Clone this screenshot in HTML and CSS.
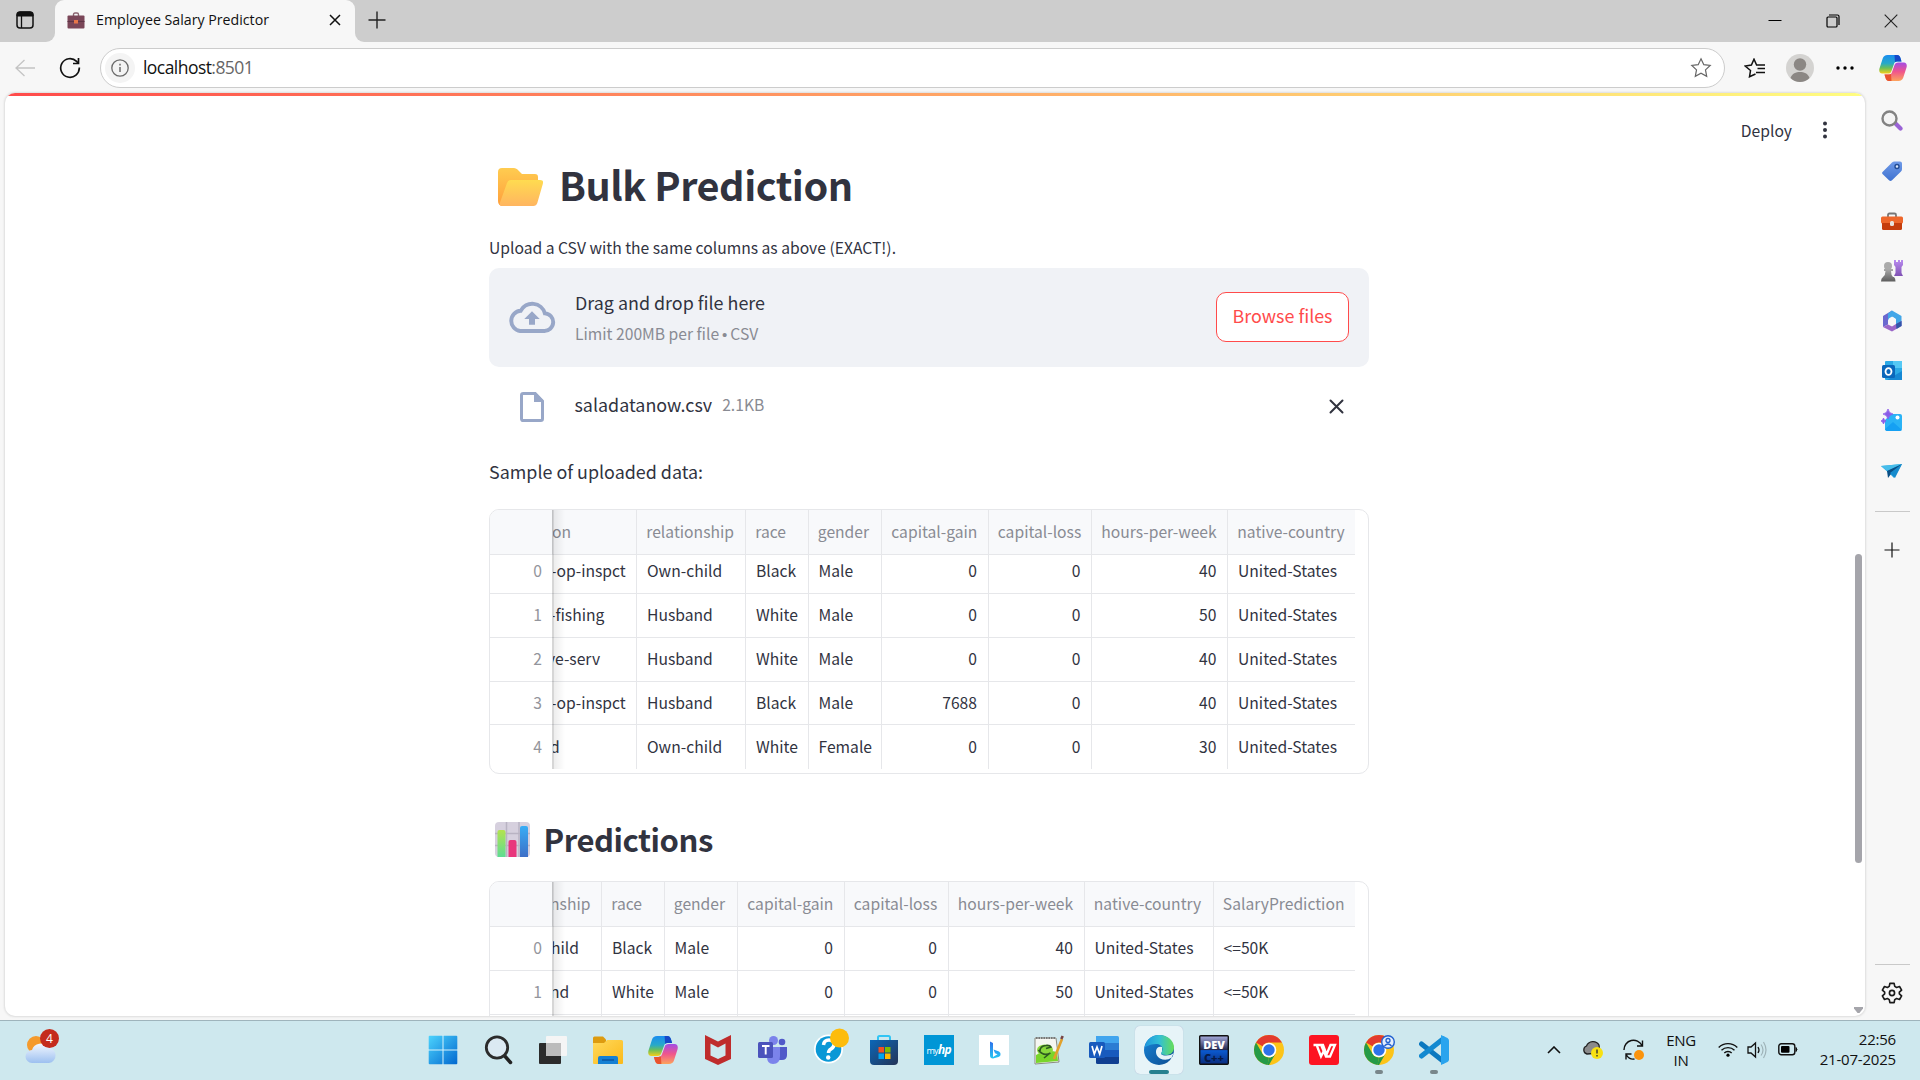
FILE: index.html
```html
<!DOCTYPE html>
<html lang="en">
<head>
<meta charset="utf-8">
<title>Employee Salary Predictor</title>
<link rel="stylesheet" href="styles.css">
</head>
<body>
<svg class="defs" width="0" height="0">
  <defs>
    <linearGradient id="gWin" x1="0" y1="0" x2="1" y2="1"><stop offset="0" stop-color="#4cd3fd"/><stop offset="1" stop-color="#0268cf"/></linearGradient>
    <linearGradient id="gCopA" x1="0" y1="0" x2="0" y2="1"><stop offset="0" stop-color="#1a8df0"/><stop offset=".45" stop-color="#27a9c9"/><stop offset=".7" stop-color="#6abf5a"/><stop offset="1" stop-color="#f6cf18"/></linearGradient>
    <linearGradient id="gCopB" x1="0" y1="0" x2="0" y2="1"><stop offset="0" stop-color="#a24ce6"/><stop offset=".5" stop-color="#f0558c"/><stop offset="1" stop-color="#fca45c"/></linearGradient>
    <linearGradient id="gFold" x1="0" y1="0" x2="1" y2="1"><stop offset="0" stop-color="#ffd95c"/><stop offset="1" stop-color="#fbb919"/></linearGradient>
    <linearGradient id="gEmo" x1="0" y1="0" x2="0" y2="1"><stop offset="0" stop-color="#ffdb50"/><stop offset="1" stop-color="#ffb560"/></linearGradient>
    <linearGradient id="gEmoBack" x1="0" y1="0" x2="0" y2="1"><stop offset="0" stop-color="#ffcc50"/><stop offset="1" stop-color="#ff9f3c"/></linearGradient>
    <linearGradient id="gEdge" x1="0" y1="0" x2="1" y2="0"><stop offset="0" stop-color="#1d94dd"/><stop offset=".5" stop-color="#32bfd6"/><stop offset="1" stop-color="#67de56"/></linearGradient>
    <linearGradient id="gEdgeB" x1="0" y1="0" x2="1" y2="1"><stop offset="0" stop-color="#1785d8"/><stop offset="1" stop-color="#0c4c91"/></linearGradient>
    <linearGradient id="gStore" x1="0" y1="0" x2="1" y2="1"><stop offset="0" stop-color="#0b67b8"/><stop offset="1" stop-color="#243457"/></linearGradient>
    <linearGradient id="gTag" x1="0" y1="0" x2="0" y2="1"><stop offset="0" stop-color="#6f9ae8"/><stop offset="1" stop-color="#3f72d0"/></linearGradient>
    <linearGradient id="gGray" x1="0" y1="0" x2="0" y2="1"><stop offset="0" stop-color="#aaa"/><stop offset="1" stop-color="#5d5d5d"/></linearGradient>
    <linearGradient id="gPurp" x1="0" y1="0" x2="0" y2="1"><stop offset="0" stop-color="#b98bf0"/><stop offset="1" stop-color="#8052b4"/></linearGradient>
    <linearGradient id="gDev" x1="0" y1="0" x2="0" y2="1"><stop offset="0" stop-color="#a9aee0"/><stop offset=".5" stop-color="#23284e"/><stop offset=".52" stop-color="#0a5ad0"/><stop offset="1" stop-color="#0b2c7c"/></linearGradient>
    <linearGradient id="gGreen" x1="0" y1="0" x2="0" y2="1"><stop offset="0" stop-color="#b3e34e"/><stop offset="1" stop-color="#5edc94"/></linearGradient>
    <linearGradient id="gBlue" x1="0" y1="0" x2="0" y2="1"><stop offset="0" stop-color="#38adf5"/><stop offset="1" stop-color="#3e6fc7"/></linearGradient>
    <linearGradient id="gBing" x1="0" y1="0" x2="0" y2="1"><stop offset="0" stop-color="#2f6fea"/><stop offset="1" stop-color="#27c8f4"/></linearGradient>
    <linearGradient id="gCloud" x1="0" y1="0" x2="0" y2="1"><stop offset="0" stop-color="#f2f7ff"/><stop offset="1" stop-color="#9dc0f0"/></linearGradient>
    <symbol id="copilot" viewBox="0 0 28 28">
      <path d="M8.500 1h9.500c2.200 0 3 1.300 3.600 3.500l.9 3h-4.300c-2 0-2.700.8-3.300 2.800l-2.400 6.600c-.6 1.800-1.600 2.700-3.700 2.700H3.200C.6 19.600-.2 17.400.4 14.800L3.700 4.500C4.500 2.200 6 1 8.500 1z" fill="url(#gCopA)"/>
      <path d="M15.500 1H18c2.200 0 3 1.300 3.600 3.500l.9 3h-4.300c-1 0-1.700.2-2.200.8z" fill="#1648c8"/>
      <path d="M19.500 27H10c-2.200 0-3-1.300-3.600-3.500l-.9-3h4.300c2 0 2.700-.8 3.300-2.800l2.400-6.600c.6-1.800 1.600-2.700 3.700-2.700h5.600c2.600 0 3.400 2.200 2.800 4.800l-3.300 10.300c-.8 2.300-2.300 3.500-4.800 3.500z" fill="url(#gCopB)"/>
      <path d="M12.500 27H10c-2.200 0-3-1.300-3.600-3.500l-.9-3h4.300c1 0 1.700-.2 2.200-.8z" fill="#e9532f"/>
    </symbol>
    <symbol id="chrome" viewBox="0 0 30 30">
      <circle cx="15" cy="15" r="15" fill="#fcc419"/>
      <path d="M15 0a15 15 0 0 1 13 7.500H15A7.500 7.500 0 0 0 8.500 11.200L2 7.500A15 15 0 0 1 15 0z" fill="#e33b2e"/>
      <path d="M2 7.500l6.500 11.250A7.500 7.500 0 0 0 15 22.500l-1.500 7.400A15 15 0 0 1 2 7.500z" fill="#259a47"/>
      <path d="M15 22.500a7.500 7.500 0 0 0 6.500-3.750L15 30h-1.600z" fill="#259a47"/>
      <circle cx="15" cy="15" r="7.300" fill="#fff"/><circle cx="15" cy="15" r="5.700" fill="#2f72e8"/>
    </symbol>
  </defs>
</svg>

<header class="tabbar">
  <div class="workspaces"><svg width="18" height="18" viewBox="0 0 18 18"><rect x="1" y="1" width="16" height="16" rx="3" fill="none" stroke="#111" stroke-width="1.500"/><path d="M1 5V4a3 3 0 0 1 3-3h10a3 3 0 0 1 3 3v1z" fill="#111" stroke="#111"/><path d="M5.500 5v12" stroke="#111" stroke-width="1.300"/></svg></div>
  <div class="tab">
    <svg class="favicon" width="18" height="17" viewBox="0 0 18 17"><path d="M6.500 4V2.500Q6.500 1 8 1h2q1.500 0 1.500 1.500V4" fill="none" stroke="#8a6470" stroke-width="1.400"/><rect x=".5" y="3.500" width="17" height="13" rx="1" fill="#7a4658"/><path d="M.5 9.500h17" stroke="#5f3546"/><rect x="7" y="8" width="4" height="3.500" fill="#e7774a"/></svg>
    <span class="tab-title">Employee Salary Predictor</span>
    <svg class="tab-close" width="12" height="12" viewBox="0 0 12 12"><path d="M1 1l10 10M11 1L1 11" stroke="#111" stroke-width="1.500"/></svg>
  </div>
  <svg class="newtab" width="18" height="18" viewBox="0 0 18 18"><path d="M9 .5v17M.5 9h17" stroke="#222" stroke-width="1.400"/></svg>
  <div class="winctl">
    <svg width="14" height="14" viewBox="0 0 14 14"><path d="M.5 6.500h13" stroke="#000"/></svg>
    <svg width="14" height="14" viewBox="0 0 14 14"><rect x="1" y="3" width="10" height="10" rx="1" fill="none" stroke="#000" stroke-width="1.200"/><path d="M3 1h8.500q1.500 0 1.500 1.500V11" fill="none" stroke="#000" stroke-width="1.200"/></svg>
    <svg width="14" height="14" viewBox="0 0 14 14"><path d="M.7.7l12.600 12.600M13.300.7L.7 13.300" stroke="#222" stroke-width="1.100"/></svg>
  </div>
</header>

<div class="toolbar">
  <svg class="back" width="20" height="18" viewBox="0 0 20 18"><path d="M20 9H1M9.500 1L1 9l8.500 8" fill="none" stroke="#c4c4c4" stroke-width="1.300"/></svg>
  <svg class="reload" width="22" height="22" viewBox="0 0 22 22"><path d="M20.300 10.500A9.300 9.300 0 1 1 17.600 4.400L19 6" fill="none" stroke="#111" stroke-width="1.700"/><path d="M19.500 1v5.500H14" fill="none" stroke="#111" stroke-width="1.700"/></svg>
  <div class="address">
    <span class="info"><svg width="18" height="18" viewBox="0 0 18 18"><circle cx="9" cy="9" r="8.200" fill="none" stroke="#6b6b6b" stroke-width="1.300"/><path d="M9 8v5M9 4.800v1.600" stroke="#6b6b6b" stroke-width="1.500"/></svg></span>
    <span class="url">localhost<span class="port">:8501</span></span>
    <svg class="star" width="22" height="22" viewBox="0 0 22 22"><path d="M11 1.800l2.800 5.900 6.400.8-4.700 4.400 1.200 6.400-5.700-3.100-5.700 3.100 1.200-6.400L1.800 8.500l6.400-.8z" fill="none" stroke="#666" stroke-width="1.200"/></svg>
  </div>
  <div class="tools">
    <svg width="22" height="20" viewBox="0 0 22 20"><path d="M11.500 16l-6 2.800 1-6.300L1.200 8l6.200-1L10 1.200 12.600 7H21M13.500 10.500H21M12 14.500h9" fill="none" stroke="#111" stroke-width="1.500"/></svg>
    <svg width="28" height="28" viewBox="0 0 28 28"><circle cx="14" cy="14" r="14" fill="#d4d3d1"/><circle cx="14" cy="10.500" r="6.200" fill="#8b8784"/><path d="M4.500 24C6 19.500 10 18 14 18s8 1.500 9.500 6A14 14 0 0 1 14 28a14 14 0 0 1-9.500-4z" fill="#8b8784"/></svg>
    <svg width="18" height="4" viewBox="0 0 18 4"><circle cx="2" cy="2" r="1.700"/><circle cx="9" cy="2" r="1.700"/><circle cx="16" cy="2" r="1.700"/></svg>
    <svg width="28" height="28"><use href="#copilot"/></svg>
  </div>
</div>

<div class="middle">
  <main class="page">
    <div class="stripe"></div>
    <div class="appbar"><span class="deploy">Deploy</span><svg width="4" height="18" viewBox="0 0 4 18"><circle cx="2" cy="2.500" r="2"/><circle cx="2" cy="9" r="2"/><circle cx="2" cy="15.500" r="2"/></svg></div>
    <div class="content">
      <h1><svg width="46" height="40" viewBox="0 0 46 40"><path d="M0 4Q0 0 4 0h12q2 0 3.500 1.500L24 6h13q3 0 3 3v20L5 38Q0 38 0 33z" fill="url(#gEmoBack)"/><path d="M13 12h29q4 0 2.800 4l-5.500 19q-1 3-4 3H4Q1 38 2 34.500L9 15q1-3 4-3z" fill="url(#gEmo)"/></svg><span>Bulk Prediction</span></h1>
      <p class="label">Upload a CSV with the same columns as above (EXACT!).</p>
      <section class="dropzone">
        <svg width="48" height="32" viewBox="0 0 46 31"><path d="M11.500 29h23a8.500 8.500 0 0 0 1-17A12.700 12.700 0 0 0 12 9.500 9.800 9.800 0 0 0 11.500 29z" fill="none" stroke="#98a7c8" stroke-width="3.800"/><path d="M23 10l7.500 7.500h-4.600V23h-5.800v-5.500h-4.600z" fill="#98a7c8"/></svg>
        <div class="drop-text"><span class="drop-title">Drag and drop file here</span><span class="drop-limit">Limit 200MB per file <span class="dot">•</span> CSV</span></div>
        <button class="browse">Browse files</button>
      </section>
      <div class="file">
        <svg width="24" height="30" viewBox="0 0 24 30"><path d="M3.200 1.500h12L22.500 9v17.800q0 1.700-1.700 1.700H3.200q-1.700 0-1.700-1.700V3.200q0-1.700 1.700-1.700z" fill="none" stroke="#98a7c8" stroke-width="3"/><path d="M14 1h2l7 7v2h-9z" fill="#98a7c8"/></svg>
        <span class="fname">saladatanow.csv</span><span class="fsize">2.1KB</span>
        <svg class="remove" width="15" height="15" viewBox="0 0 15 15"><path d="M1.500 1.500l12 12M13.500 1.500l-12 12" stroke="#31333f" stroke-width="2" stroke-linecap="round"/></svg>
      </div>
      <p class="sample">Sample of uploaded data:</p>

      <div class="frame frame-sample">
        <div class="grid sample-grid">
          <div class="row head"><b></b><b class="cut">on</b><b>relationship</b><b>race</b><b>gender</b><b>capital-gain</b><b>capital-loss</b><b>hours-per-week</b><b>native-country</b></div>
          <div class="row first"><i>0</i><span class="cut deep">-op-inspct</span><span>Own-child</span><span>Black</span><span>Male</span><span class="num">0</span><span class="num">0</span><span class="num">40</span><span>United-States</span></div>
          <div class="row"><i>1</i><span class="cut deeper">-fishing</span><span>Husband</span><span>White</span><span>Male</span><span class="num">0</span><span class="num">0</span><span class="num">50</span><span>United-States</span></div>
          <div class="row"><i>2</i><span class="cut deepest">ve-serv</span><span>Husband</span><span>White</span><span>Male</span><span class="num">0</span><span class="num">0</span><span class="num">40</span><span>United-States</span></div>
          <div class="row"><i>3</i><span class="cut deep">-op-inspct</span><span>Husband</span><span>Black</span><span>Male</span><span class="num">7688</span><span class="num">0</span><span class="num">40</span><span>United-States</span></div>
          <div class="row last"><i>4</i><span class="cut deeper">d</span><span>Own-child</span><span>White</span><span>Female</span><span class="num">0</span><span class="num">0</span><span class="num">30</span><span>United-States</span></div>
        </div>
      </div>

      <h2><svg width="35" height="35" viewBox="0 0 35 35"><rect width="35" height="35" rx="4" fill="#d6d0de"/><path d="M11.500 0v35M24 0v35M0 11.500h35M0 23.500h35" stroke="#b9b3c3" stroke-width="1.500"/><path d="M2.500 35V10q0-2 2-2h4q2 0 2 2v25z" fill="url(#gGreen)"/><path d="M13.500 35V20q0-2 2-2h4q2 0 2 2v15z" fill="#e8367c"/><path d="M25 35V6q0-2 2-2h4q2 0 2 2v29z" fill="url(#gBlue)"/></svg><span>Predictions</span></h2>

      <div class="frame frame-pred">
        <div class="grid pred-grid">
          <div class="row head"><b></b><b class="cut deeper">nship</b><b>race</b><b>gender</b><b>capital-gain</b><b>capital-loss</b><b>hours-per-week</b><b>native-country</b><b>SalaryPrediction</b></div>
          <div class="row"><i>0</i><span class="cut deep">hild</span><span>Black</span><span>Male</span><span class="num">0</span><span class="num">0</span><span class="num">40</span><span>United-States</span><span>&lt;=50K</span></div>
          <div class="row"><i>1</i><span class="cut deeper">nd</span><span>White</span><span>Male</span><span class="num">0</span><span class="num">0</span><span class="num">50</span><span>United-States</span><span>&lt;=50K</span></div>
          <div class="row"><i></i><span></span><span></span><span></span><span></span><span></span><span></span><span></span><span></span></div>
        </div>
      </div>
    </div>
    <div class="thumb"></div>
    <svg class="scroll-down" width="9" height="6" viewBox="0 0 9 6"><path d="M0 0h9v1.500L5.500 6h-2L0 1.500z" fill="#a5a5ab"/></svg>
  </main>

  <aside class="sidebar">
    <svg width="22" height="22" viewBox="0 0 22 22"><path d="M14.500 13.500l5 5" stroke="#9a63d6" stroke-width="4.200" stroke-linecap="round"/><circle cx="8.500" cy="8.500" r="7" fill="#f4f4f4" stroke="#828282" stroke-width="2.400"/></svg>
    <svg width="22" height="22" viewBox="0 0 22 22"><path d="M1.500 12L11 2.500Q12 1.500 13.500 1.500h5.500q2 0 2 2v5.500q0 1.500-1 2.500L11 20.300q-1.500 1.500-3 0L1.500 14q-1-1 0-2z" fill="url(#gTag)"/><circle cx="16" cy="6.500" r="2" fill="#dbe8fc" stroke="#234c94" stroke-width="1.400"/></svg>
    <svg width="22" height="22" viewBox="0 0 22 22"><path d="M7 7V5q0-1.500 1.500-1.500h5Q15 3.500 15 5v2" fill="none" stroke="#777" stroke-width="1.800"/><rect y="6.500" width="22" height="7" rx="1.500" fill="#ee672b"/><path d="M1 13h20v5.500q0 1.500-1.500 1.500h-17Q1 20 1 18.500z" fill="#c53d0d"/><rect x="9" y="11" width="4" height="5" rx="1.500" fill="#e7e3de"/></svg>
    <svg width="22" height="22" viewBox="0 0 22 22"><path d="M13 0h2v2h2V0h2v2h1V0h2v5l-1.500 2v6l1.500 3h-9l1.500-3V7L13 5z" fill="url(#gPurp)"/><circle cx="7" cy="6" r="4" fill="#aaa"/><path d="M3 9h9v2h-2q0 4 2 6h1q1.500 1 1.500 4.500H0Q0 18 2 17q2.500-2 2.500-6H3z" fill="url(#gGray)"/></svg>
    <svg width="22" height="22" viewBox="0 0 22 22"><path d="M11 .5L2 6v11l5-2.500V8l4-2.500z" fill="#6a68cf"/><path d="M11 .5l-4 3v7l4-4 4 2.500v5l5.500 2V6z" fill="#42a6e8"/><path d="M20.500 11v5L11 21.500 2 17l5-2.500 4 2 4-2.500z" fill="#9b67c8"/><path d="M15 14l5.500-3v5l-5 3z" fill="#3156a8"/><circle cx="11" cy="11" r="3.700" fill="#f7f7f7"/></svg>
    <svg width="22" height="22" viewBox="0 0 22 22"><rect x="4" y="1" width="17" height="19" rx="1" fill="#2caae6"/><path d="M12 1h9v7h-9z" fill="#55c9f5"/><path d="M21 11v9H6z" fill="#1688d4"/><rect x="1" y="5" width="13" height="13" rx="1.500" fill="#0a67bb"/><ellipse cx="7.500" cy="11.500" rx="3" ry="3.400" fill="none" stroke="#fff" stroke-width="1.800"/></svg>
    <svg class="photo" width="22" height="22" viewBox="0 0 22 22"><path d="M4 11L10 5h9q2 0 2 2v12q0 3-3 3H7q-3 0-3-3z" fill="#2ab3f6"/><path d="M4 20l8-7 9 8q-1 1-3 1H7q-3 0-3-2z" fill="#15a0f3"/><circle cx="16.500" cy="8.500" r="2" fill="#fff"/><path d="M7 0q.8 4.500 5 5-4.200.8-5 5-.8-4.200-5-5 4.200-.5 5-5zM2.500 9q.4 2.400 2.500 3-2.100.5-2.500 3-.4-2.500-2.500-3 2.100-.6 2.500-3z" fill="#8a5ce8" stroke="#8a5ce8" stroke-width=".8"/></svg>
    <svg width="22" height="22" viewBox="0 0 22 22"><path d="M0 6l21-2-8 14-4-4z" fill="#26a5e0"/><path d="M0 6l21-2L6 11z" fill="#46bdeb"/><path d="M21 4L6 11l1 7 3-4z" fill="#094f86"/><path d="M21 4l-12 9 5 5z" fill="#168bcd"/></svg>
    <hr>
    <svg class="add" width="16" height="16" viewBox="0 0 16 16"><path d="M8 .5v15M.5 8h15" stroke="#111" stroke-width="1.200"/></svg>
    <hr class="low">
    <svg class="gear" width="22" height="22" viewBox="0 0 24 24"><path d="M9.700 1.500h4.600l.7 3.300 2 1.200 3.200-1.100 2.300 4-2.500 2.200v1.800l2.500 2.200-2.300 4-3.200-1.100-2 1.200-.7 3.300H9.700L9 19.200 7 18l-3.200 1.100-2.300-4L4 12.900v-1.800L1.500 8.900l2.300-4L7 6l2-1.200z" fill="none" stroke="#1a1a1a" stroke-width="1.800" stroke-linejoin="round"/><circle cx="12" cy="12" r="2.800" fill="none" stroke="#1a1a1a" stroke-width="1.800"/></svg>
  </aside>
</div>

<footer class="taskbar">
  <div class="weather"><svg width="34" height="30" viewBox="0 0 34 30"><circle cx="12" cy="11" r="9" fill="#f59a2c"/><path d="M8 29a6.500 6.500 0 0 1 0-13 9 9 0 0 1 16-2.500A7.800 7.800 0 0 1 25 29z" fill="url(#gCloud)"/></svg><span class="badge">4</span></div>
  <nav class="apps">
    <div class="app"><svg width="30" height="30" viewBox="0 0 30 30"><rect x=".7" y=".7" width="28.600" height="28.600" rx="1" fill="url(#gWin)"/><path d="M15 0v30M0 15h30" stroke="#d6f2fb" stroke-width="1"/></svg></div>
    <div class="app"><svg width="30" height="30" viewBox="0 0 30 30"><path d="M20 19l7.500 8.500" stroke="#222" stroke-width="3.500" stroke-linecap="round"/><circle cx="14" cy="12.500" r="10.700" fill="#dbe9f2" stroke="#2b2b2b" stroke-width="2.800"/></svg></div>
    <div class="app"><svg width="30" height="30" viewBox="0 0 30 30"><rect x="1" y="8" width="22" height="21" rx="1" fill="#2b2b2b"/><rect x="8" y="1" width="21" height="20" rx="1" fill="#f5f5f5"/><path d="M8 8h15v13H8z" fill="#bcbcbc"/></svg></div>
    <div class="app"><svg width="30" height="30" viewBox="0 0 30 30"><path d="M0 3q0-1.500 1.500-1.500H10L13 4.500V10H0z" fill="#dd9b10"/><path d="M0 8h11l3-3h14.500Q30 5 30 6.500v21.500q0 1-1 1H1q-1 0-1-1z" fill="url(#gFold)"/><path d="M5 29v-6q0-2 2-2h16q2 0 2 2v6z" fill="#1580d3"/><path d="M9 25h12" stroke="#0a4f99" stroke-width="1.300"/></svg></div>
    <div class="app"><svg width="30" height="30"><use href="#copilot"/></svg></div>
    <div class="app"><svg width="30" height="30" viewBox="0 0 30 30"><path d="M2 0l13 6.500L28 0v24l-13 6-13-6zM7.500 8.500v12L15 24l7.500-3.500v-12L15 12.500z" fill="#bf2c2c" fill-rule="evenodd"/></svg></div>
    <div class="app"><svg width="30" height="30" viewBox="0 0 30 30"><circle cx="24" cy="7" r="3.300" fill="#5059c9"/><circle cx="15.500" cy="5.500" r="4.500" fill="#7b83eb"/><path d="M19 12h10v8q0 5-5 5h-5z" fill="#5059c9"/><path d="M9 12h13v9q0 8-7 8-6 0-6-7z" fill="#7b83eb"/><rect y="7" width="15" height="16" rx="1.500" fill="#4b53bc"/><path d="M4 11h7.500M7.700 11v8.500" stroke="#fff" stroke-width="1.900"/></svg></div>
    <div class="app"><svg width="36" height="38" viewBox="0 0 36 38"><circle cx="14.500" cy="22" r="14.500" fill="#fff"/><circle cx="14.500" cy="22" r="12.800" fill="#0a98d6"/><path d="M9.500 18q.5-5 5.500-5 5 0 5 4.500 0 2.500-3 4.500-2.500 1.500-2.500 4" fill="none" stroke="#fff" stroke-width="3.500"/><circle cx="14.200" cy="30.500" r="2.200" fill="#fff"/><circle cx="25.500" cy="11" r="9.500" fill="#fdbc0c"/></svg></div>
    <div class="app"><svg width="30" height="30" viewBox="0 0 30 30"><path d="M9 6V2.500Q9 1 10.500 1h9Q21 1 21 2.500V6" fill="none" stroke="#32c5f4" stroke-width="2"/><path d="M1 5h28v21q0 4-4 4H5q-4 0-4-4z" fill="url(#gStore)"/><path d="M9.500 12H15v5.500H9.500z" fill="#f25022"/><path d="M16 12h5.500v5.500H16z" fill="#7fba00"/><path d="M9.500 18.500H15V24H9.500z" fill="#00a4ef"/><path d="M16 18.500h5.500V24H16z" fill="#ffb900"/></svg></div>
    <div class="app"><div class="myhp">my<em>hp</em></div></div>
    <div class="app"><svg width="30" height="30" viewBox="0 0 30 30"><path d="M0 0h30v30H0z" fill="#fff"/><path d="M11 6.500l3 1.500v14l4.500-2.700-2.500-1-1.500-3.800 5.500 2q2 1 1.500 3.500 0 1-2 2L14 23.500q-3 0-3-3z" fill="url(#gBing)"/></svg></div>
    <div class="app"><svg width="30" height="30" viewBox="0 0 30 30"><path d="M1 3h21l3 24-24 2z" fill="#f6f6f2" stroke="#8b8b80"/><path d="M2 20q10-6 21-3l1 9-22 2z" fill="#79d52a"/><path d="M2 3h20" stroke="#777" stroke-width="2" stroke-dasharray="1.500 1"/><ellipse cx="11" cy="15" rx="8" ry="5.500" fill="#8ad83e"/><path d="M6 16q0-5 6-5.500 4-.5 5 1.500l-5 1.500M4.500 15q5 7 12 3M10 23l5-4" fill="none" stroke="#2e5a20" stroke-width="1.600"/><path d="M20 24L28 4" stroke="#e2a12b" stroke-width="2.600"/><path d="M27.300 4L28.700 1" stroke="#744" stroke-width="2.600"/></svg></div>
    <div class="app"><svg width="30" height="30" viewBox="0 0 30 30"><path d="M7 1h21.500Q30 1 30 2.500V8H7z" fill="#41a5ee"/><path d="M7 8h23v7H7z" fill="#2b7cd3"/><path d="M7 15h23v7H7z" fill="#185abd"/><path d="M7 22h23v5.500q0 1.500-1.500 1.500h-20Q7 29 7 27.500z" fill="#103f91"/><rect y="7" width="16" height="16" rx="1.500" fill="#185abd"/><path d="M3 11l2.300 8L8 12l2.700 7L13 11" fill="none" stroke="#fff" stroke-width="1.700"/></svg></div>
    <div class="app active"><svg width="30" height="30" viewBox="0 0 30 30"><circle cx="15" cy="15" r="15" fill="url(#gEdgeB)"/><path d="M.5 13C1.500 5 8 0 15 0c9 0 15 6 15 12.500 0 5-4 7.500-8 7.500-3 0-5-1-5-2 0-.8 1.500-1.500 1.500-4 0-3-3-5-6.500-5C6 9 1 12 .5 13z" fill="url(#gEdge)"/><path d="M18 12q-5-1-6 4-.5 5 4 7.500 6 3 12-1l1.500.5A15 15 0 0 1 27 24q2-5 3-6-3 2.500-8 2.500-4.500 0-5-2 0-1 1-2z" fill="#e6f4f8"/></svg><span class="mark"></span></div>
    <div class="app"><svg width="30" height="30" viewBox="0 0 30 30"><rect x=".7" y=".7" width="28.600" height="28.600" rx="1" fill="url(#gDev)" stroke="#111" stroke-width="1.400"/><text x="15" y="13.500" class="dev dev-top">DEV</text><text x="15" y="26.500" class="dev dev-low">C++</text></svg></div>
    <div class="app"><svg width="30" height="30"><use href="#chrome"/></svg></div>
    <div class="app"><svg width="30" height="30" viewBox="0 0 30 30"><rect width="30" height="30" rx="3" fill="#fd1422"/><path d="M4.500 10H14l3.500 9.500L21.500 10h4.500L21 21.500h-4L12.500 11M8 11l4 10.500 2.500-5" fill="none" stroke="#fff" stroke-width="2.300"/></svg></div>
    <div class="app"><svg width="30" height="30"><use href="#chrome"/></svg><svg class="profile" width="14" height="14" viewBox="0 0 14 14"><circle cx="7" cy="7" r="6.300" fill="#e4edfc" stroke="#2160cf" stroke-width="1.400"/><circle cx="7" cy="5.500" r="2" fill="none" stroke="#2160cf" stroke-width="1.300"/><path d="M3.500 11q3.500-4 7 0" fill="none" stroke="#2160cf" stroke-width="1.300"/></svg><span class="mark small"></span></div>
    <div class="app"><svg width="30" height="30" viewBox="0 0 30 30"><path d="M2.500 9L24 26" stroke="#0b78bf" stroke-width="5" stroke-linecap="round"/><path d="M2.500 21L24 4" stroke="#1389d0" stroke-width="5" stroke-linecap="round"/><path d="M22 0l6.500 3Q30 4 30 5.500v19q0 1.500-1.500 2.500L22 30z" fill="#2aa4ee"/></svg><span class="mark small"></span></div>
  </nav>
  <div class="tray">
    <svg class="chev" width="14" height="8" viewBox="0 0 14 8"><path d="M1 7l6-6 6 6" fill="none" stroke="#111" stroke-width="1.600"/></svg>
    <svg class="cloud" width="22" height="20" viewBox="0 0 22 20"><path d="M5 14a4.200 4.200 0 0 1-.5-8A7 7 0 0 1 17 5l1 8z" fill="#8b8b8b" stroke="#222" stroke-width="1.300"/><circle cx="15" cy="13" r="6" fill="#f8e112"/><path d="M15 9.500v4M15 15v1.500" stroke="#333" stroke-width="1.400"/></svg>
    <svg class="sync" width="22" height="22" viewBox="0 0 22 22"><path d="M1 11A9.500 9.500 0 0 1 19 6.500M19.500 1.500v5.500H14M3 20.500V15h5.500M3.500 16q3 5 8 4" fill="none" stroke="#111" stroke-width="1.400"/><circle cx="16" cy="16" r="5" fill="#fb930c"/></svg>
    <div class="lang">ENG<br>IN</div>
    <svg class="wifi" width="20" height="15" viewBox="0 0 20 15"><path d="M.7 5.500a13.200 13.200 0 0 1 18.600 0M3.500 8.300a9.200 9.200 0 0 1 13 0M6.300 11a5.200 5.200 0 0 1 7.400 0" fill="none" stroke="#111" stroke-width="1.400"/><circle cx="10" cy="13.200" r="1.600"/></svg>
    <svg class="vol" width="20" height="18" viewBox="0 0 20 18"><path d="M1 6h3l4.500-4v14L4 12H1z" fill="none" stroke="#111" stroke-width="1.300"/><path d="M11 6q2 3 0 6" fill="none" stroke="#111" stroke-width="1.300"/><path d="M14 3.500q4 5.500 0 11M16.500 1q5 8 0 16" fill="none" stroke="#9fb3b8" stroke-width="1.200"/></svg>
    <svg class="batt" width="20" height="13" viewBox="0 0 20 13"><rect x=".8" y=".8" width="16" height="11" rx="2.500" fill="none" stroke="#111" stroke-width="1.400"/><rect x="3" y="3" width="8.500" height="6.800" rx="1"/><path d="M18 4.500q2 2 0 4z" stroke="#111"/></svg>
    <div class="clock">22:56<br>21-07-2025</div>
  </div>
</footer>
</body>
</html>
```
FILE: styles.css
```css
* { box-sizing: border-box; }
body { margin: 0; width: 1920px; height: 1080px; overflow: hidden; display: flex; flex-direction: column; background: #f7f7f7; font-family: "Noto Sans CJK SC", "Noto Sans CJK JP", sans-serif; color: #31333f; }
svg { display: block; flex: none; }
.defs { position: absolute; }

/* Browser chrome */
.tabbar { height: 43px; flex: none; display: flex; align-items: flex-start; background: #f7f7f7; font-family: "Open Sans", sans-serif; }
.workspaces { width: 55px; height: 42px; background: #cdcdcd; border-bottom-right-radius: 9px; padding: 11px 0 0 16px; }
.tab { width: 300px; height: 43px; background: #f7f7f7; border-radius: 9px 9px 0 0; box-shadow: 0 -12px 0 #cdcdcd; display: flex; align-items: center; padding: 0 14px 3px 12px; }
.tab-title { margin: -2px 0 0 11px; font-size: 14.200px; color: #111; }
.tab-close { margin-left: auto; }
.newtab { width: 60px; height: 42px; padding: 11px 29px 13px 13px; background: #cdcdcd; border-bottom-left-radius: 9px; }
.winctl { flex: 1; height: 42px; background: #cdcdcd; display: flex; justify-content: flex-end; gap: 44px; padding: 14px 22px 0 0; }
.toolbar { height: 50px; flex: none; display: flex; align-items: center; padding: 0 13px 0 15px; font-family: "Open Sans", sans-serif; }
.reload { margin-left: 24px; }
.address { margin-left: 19px; width: 1625px; height: 40px; border: 1px solid #ccc; border-radius: 20px; background: #fff; display: flex; align-items: center; padding: 0 12px 0 4px; }
.info { width: 30px; height: 30px; border-radius: 50%; background: #f4f4f4; display: grid; place-items: center; }
.url { margin: -2px 0 0 8px; font-size: 17.500px; color: #111; letter-spacing: -0.550px; }
.port { color: #666; }
.star { margin-left: auto; }
.tools { flex: 1; display: flex; align-items: center; padding-left: 19px; }
.tools svg:nth-child(2) { margin-left: 20px; }
.tools svg:nth-child(3) { margin-left: 22px; }
.tools svg:nth-child(4) { margin-left: auto; }

/* App viewport */
.middle { height: 927px; flex: none; display: flex; }
.page { position: relative; width: 1860px; height: 923px; margin-left: 5px; background: #fff; border-radius: 10px; overflow: hidden; box-shadow: 0 0 2px 1px #ddd; }
.stripe { height: 3px; background: linear-gradient(90deg, #ff4b4b, #fffd80); }
.appbar { height: 60px; display: flex; justify-content: flex-end; align-items: center; padding: 8px 38px 0 0; fill: #31333f; }
.deploy { font-size: 15.660px; margin: 0 31px 0 0; }
.content { width: 880px; margin-left: 484px; }
h1, h2, p { margin: 0; font-weight: 700; }
h1 { height: 57px; display: flex; align-items: center; font-size: 39.600px; line-height: 57px; padding-left: 9px; margin-top: 1px; }
h1 svg { margin-top: 5px; }
h1 span { margin: -5px 0 0 15px; letter-spacing: -0.450px; }
.label { font-weight: 400; font-size: 15.660px; line-height: 26px; margin: 21px 0 7px; }
.dropzone { height: 99px; border-radius: 10px; background: #f0f2f6; display: flex; align-items: center; padding: 0 20px 0 19px; }
.dropzone > svg { margin-top: -2px; }
.drop-text { display: flex; flex-direction: column; margin-left: 19px; }
.drop-title { font-size: 17.900px; line-height: 31px; margin-top: 1px; }
.drop-limit { font-size: 15.660px; line-height: 32px; color: #898b93; margin-bottom: -1px; }
.dot { font-family: "Liberation Sans", sans-serif; font-size: 15px; line-height: 1; margin: 0 -0.500px; }
.browse { margin: -1px 0 0 auto; width: 133px; height: 50px; border: 1px solid #ff4b4b; border-radius: 10px; background: #fff; color: #ff4b4b; font: 17.900px "Noto Sans CJK SC", sans-serif; padding: 0 0 4px; }
.file { display: flex; align-items: center; height: 80px; padding: 0 25px 0 31px; }
.fname { font-size: 17.900px; margin-left: 30.500px; line-height: 30px; margin-top: -7px; }
.fsize { font-size: 15.660px; color: #898b93; margin-left: 10px; margin-top: -5px; }
.remove { margin: -1px 0 0 auto; }
.sample { font-weight: 400; font-size: 17.900px; line-height: 30px; margin: 9px 0 23px; }

/* Data grids */
.frame { border: 1px solid #e6e7ea; border-radius: 10px; overflow: hidden; }
.frame-sample { height: 265px; }
.frame-pred { height: 260px; }
.grid { position: relative; width: 865px; font-size: 15.660px; }
.grid::after { content: ""; position: absolute; left: 62px; top: 0; bottom: 0; width: 13px; background: linear-gradient(90deg, rgba(0,0,0,.16) 0 2px, rgba(0,0,0,.07) 2px, transparent); }
.row { display: grid; height: 43.750px; line-height: 42px; }
.sample-grid .row { grid-template-columns: 63px 84px 109px 62.500px 73.500px 106.500px 103.500px 136px 127px; }
.pred-grid .row { grid-template-columns: 63px 49px 62.500px 73.500px 106.500px 104px 136px 129px 141.500px; }
.row > * { border-right: 1px solid #e6e7ea; border-bottom: 1px solid #e6e7ea; padding: 0 6px 0 10px; white-space: nowrap; overflow: hidden; font-weight: 400; font-style: normal; }
.row > :last-child { border-right: 0; }
.row > b { padding-left: 9.300px; }
.row .cut { padding: 0; text-indent: -1px; }
.row .deep { text-indent: -2px; }
.row .deeper { text-indent: -3px; }
.row .deepest { text-indent: -6px; }
.row i { color: #93959c; text-align: right; padding-right: 11px; border-right: 0; }
.row .num { text-align: right; padding-right: 10.500px; }
.head { height: 45px; line-height: 43px; background: #f8f9fb; color: #898b93; }
.first { height: 39px; line-height: 31px; }
.last { line-height: 43px; }
.last > * { border-bottom: 0; }
h2 { height: 60px; display: flex; align-items: center; margin: 37px 0 10px; padding-left: 6px; font-size: 31px; }
h2 svg { margin-top: -4px; }
h2 span { margin: -6px 0 0 13.500px; letter-spacing: -0.450px; }
.thumb { position: absolute; right: 3px; top: 461px; width: 7px; height: 309px; border-radius: 4px; background: #a5a5ab; }
.scroll-down { position: absolute; right: 2px; bottom: 3px; }

/* Edge sidebar */
.sidebar { flex: 1; display: flex; flex-direction: column; align-items: center; gap: 28px; padding: 17px 1px 0 0; }
.sidebar hr { width: 35px; height: 1px; border: 0; background: #c9c9c9; margin: 1px 0 0; }
.sidebar .photo { margin: -1px 0 1px; }
.sidebar .add { margin-top: 2px; }
.sidebar .low { margin-top: auto; }
.sidebar .gear { margin: -11px 0 16px; }

/* Windows taskbar */
.taskbar { position: relative; height: 60px; flex: none; display: flex; background: #cee8ee; border-top: 1px solid #9fb4bc; color: #111; font-family: "Open Sans", sans-serif; }
.weather { position: relative; width: 415px; padding: 13px 0 0 24px; }
.badge { position: absolute; left: 40px; top: 8px; width: 19px; height: 19px; border-radius: 50%; background: #c42b1c; color: #fff; font-size: 12px; line-height: 19px; text-align: center; }
.apps { display: flex; gap: 7.080px; margin-left: 4px; padding-top: 5px; }
.app { position: relative; width: 48px; height: 48px; display: grid; place-items: center; border-radius: 5px; }
.app:nth-child(8) svg { margin: -6px -5px 2px 1px; }
.active { background: #e7f4f8; box-shadow: 0 0 1px #aac; }
.mark { position: absolute; bottom: 0; left: 14px; width: 20px; height: 4px; border-radius: 2px; background: #26808f; }
.mark.small { width: 8px; left: 20px; background: #78868a; }
.profile { position: absolute; right: 8px; top: 9px; }
.myhp { width: 30px; height: 30px; background: #0096d6; color: #fff; font-size: 9px; line-height: 29px; text-align: center; letter-spacing: -0.700px; }
.myhp em { font-weight: 700; font-size: 12px; }
.dev { font: 800 11px/1 "Open Sans", sans-serif; text-anchor: middle; }
.dev-top { fill: #fff; }
.dev-low { fill: #061a48; }
.tray { margin-left: auto; display: flex; align-items: center; padding: 0 24px 2px 0; font-size: 15px; line-height: 20px; }
.chev { margin-right: 21px; }
.cloud { margin-right: 19px; }
.sync { margin-right: 21px; }
.lang { text-align: center; width: 30px; margin-right: 22px; letter-spacing: -0.300px; }
.wifi { margin-right: 9px; }
.vol { margin-right: 11px; }
.batt { margin-right: 20px; }
.clock { text-align: right; width: 78px; white-space: nowrap; letter-spacing: -0.200px; margin-top: -2px; }
```
